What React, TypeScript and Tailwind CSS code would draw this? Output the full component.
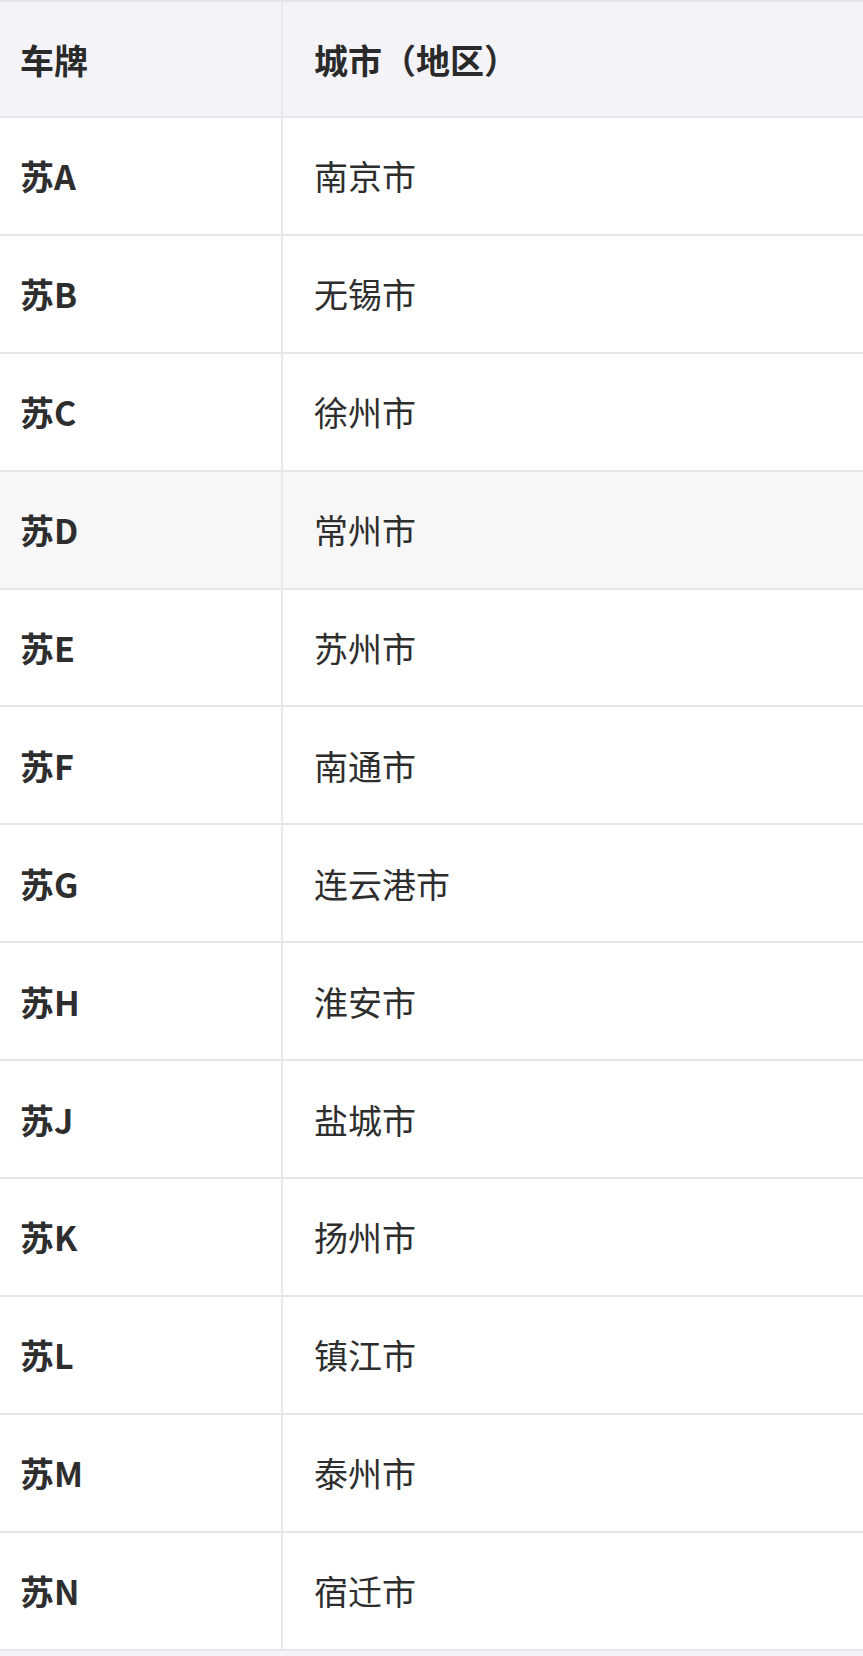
const rows: [string, string][] = [
  ["苏A", "南京市"],
  ["苏B", "无锡市"],
  ["苏C", "徐州市"],
  ["苏D", "常州市"],
  ["苏E", "苏州市"],
  ["苏F", "南通市"],
  ["苏G", "连云港市"],
  ["苏H", "淮安市"],
  ["苏J", "盐城市"],
  ["苏K", "扬州市"],
  ["苏L", "镇江市"],
  ["苏M", "泰州市"],
  ["苏N", "宿迁市"],
];

const font = { fontFamily: '"Noto Sans CJK SC", "Noto Sans", sans-serif' };

export default function App() {
  return (
    <div className="w-[863px] h-[1656px] bg-[#f4f4f6] overflow-hidden" style={font}>
      <div className="bg-white border-t-2 border-[#e6e6ea]">
        <div className="grid grid-cols-[283px_1fr] h-[116px] bg-[#f3f3f8] border-b-2 border-[#e6e6ea] text-[34px] font-bold text-[#2a2a2a]">
          <div className="flex items-center pl-[20px] border-r-2 border-[#e8e8ec]">车牌</div>
          <div className="flex items-center pl-[31px]">城市（地区）</div>
        </div>
        {rows.map(([plate, city], i) => (
          <div
            key={plate}
            className={`grid grid-cols-[283px_1fr] h-[117.9px] border-b-2 border-[#e6e6ea] text-[34px] text-[#2e2e2e] ${
              i === 3 ? "bg-[#f7f7f8]" : "bg-white"
            }`}
          >
            <div className="flex items-center pl-[20px] font-bold border-r-2 border-[#e8e8ec]">{plate}</div>
            <div className="flex items-center pl-[31px]">{city}</div>
          </div>
        ))}
      </div>
    </div>
  );
}
